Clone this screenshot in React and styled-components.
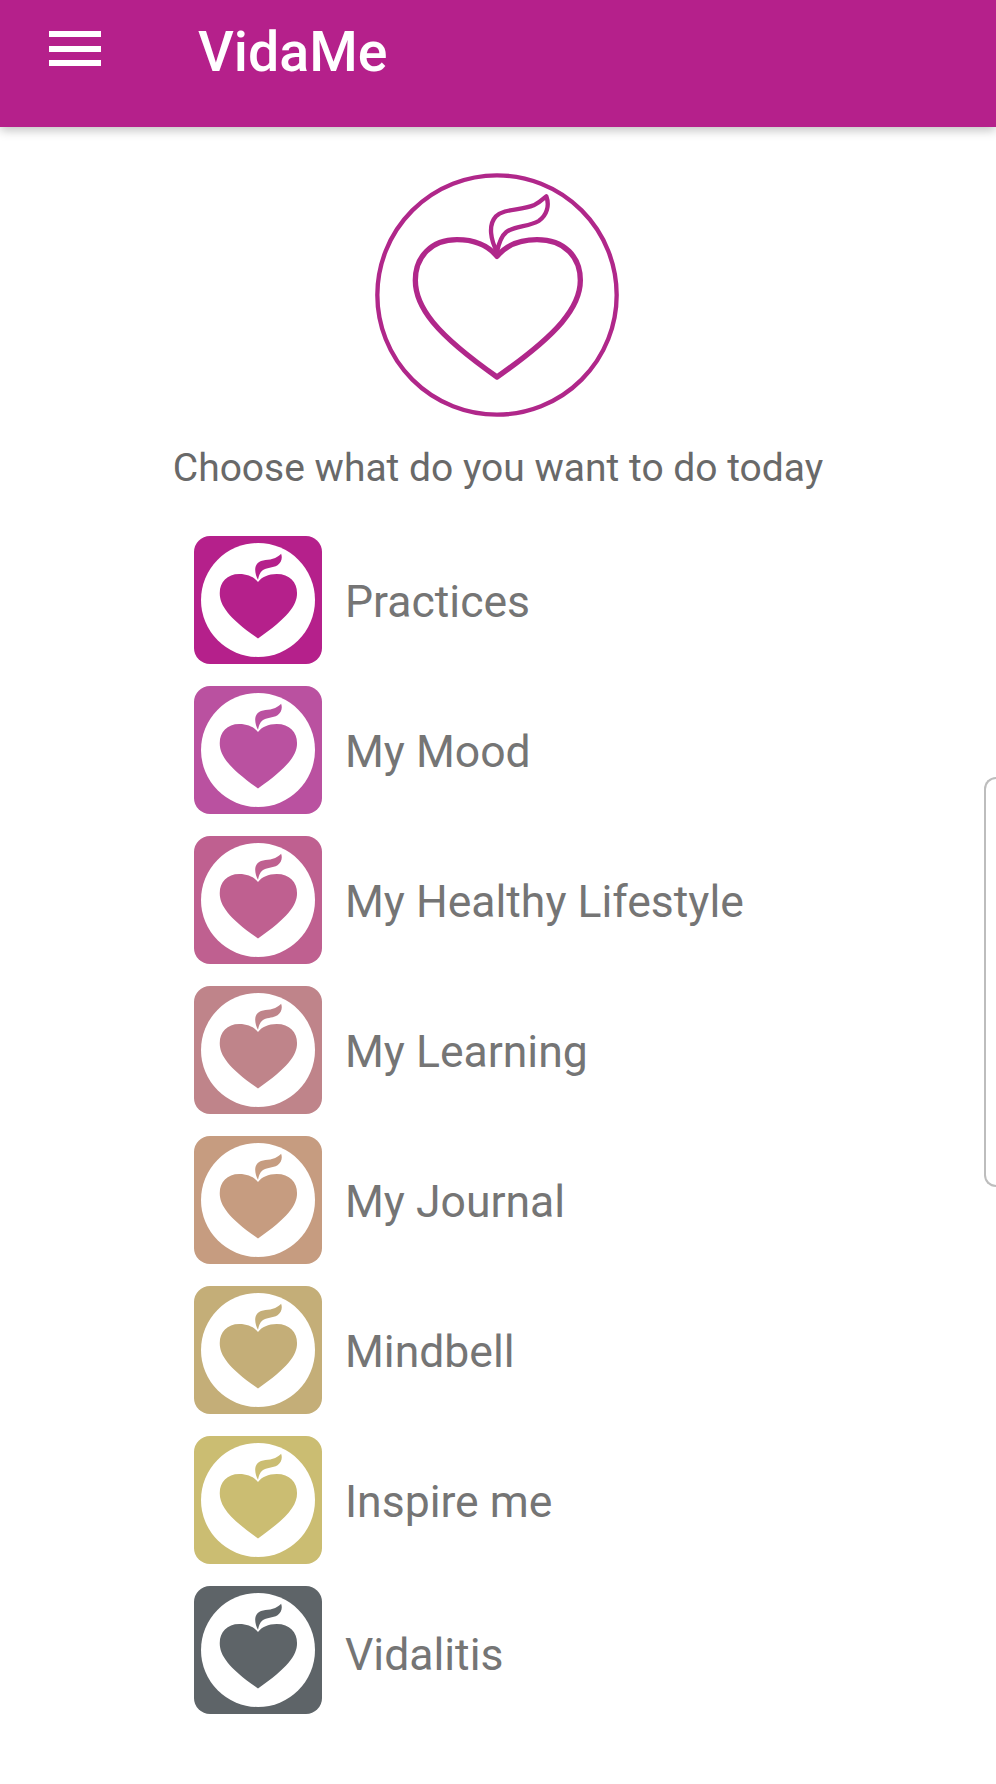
import React from "react"
import styled, { createGlobalStyle } from "styled-components"

const GlobalStyle = createGlobalStyle`
    html, body {
        margin: 0;
        padding: 0;
        background: #fff;
        font-family: Roboto, "Liberation Sans", sans-serif;
    }
`

const Page = styled.div`
    position: relative;
    width: 996px;
    height: 1784px;
    overflow: hidden;
    background: #fff;
`

const Header = styled.header`
    display: flex;
    align-items: flex-start;
    height: 127px;
    background: #b5208b;
    box-shadow: 0 3px 10px rgba(0, 0, 0, 0.26);
`

const Burger = styled.div`
    display: flex;
    flex-direction: column;
    gap: 8.5px;
    width: 52px;
    margin: 31px 0 0 49px;
`

const BurgerLine = styled.span`
    display: block;
    height: 6px;
    background: #fff;
`

const Title = styled.h1`
    margin: 22px 0 0 97px;
    font-size: 55.5px;
    line-height: 62px;
    font-weight: 500;
    color: #fff;
`

const Content = styled.main`
    display: flex;
    flex-direction: column;
    align-items: center;
    padding-top: 43px;
`

const BigLogo = styled.svg`
    display: block;
    width: 250px;
    height: 250px;
    margin-left: -2px;
`

const Intro = styled.p`
    margin: 25px 0 0;
    font-size: 39px;
    line-height: 46px;
    color: #696969;
`

const List = styled.ul`
    display: flex;
    flex-direction: column;
    gap: 22px;
    align-self: flex-start;
    list-style: none;
    margin: 45px 0 0;
    padding: 0 0 0 194px;
`

const Row = styled.li`
    display: flex;
    align-items: center;
    gap: 23px;
`

const Tile = styled.div`
    display: flex;
    align-items: center;
    justify-content: center;
    width: 128px;
    height: 128px;
    border-radius: 16px;
    background: ${props => props.$color};
`

const TileLogo = styled.svg`
    display: block;
    width: 114px;
    height: 114px;
`

const Label = styled.span`
    margin-top: ${props => props.$drop}px;
    font-size: 44.5px;
    line-height: 52px;
    color: #757575;
`

const SidePanel = styled.div`
    position: absolute;
    top: 777px;
    right: 0;
    width: 10px;
    height: 406px;
    border: 2px solid #bdbdbd;
    border-right: none;
    border-radius: 15px 0 0 15px;
`

const HEART = "M410 288C385 258 345 238 290 238C212 238 165 290 165 360C165 440 225 520 410 650C595 520 660 440 660 360C660 290 613 238 530 238C475 238 435 258 410 288Z"
const LEAF = "M410 275C392 240 382 195 407 168C432 143 480 152 520 135C540 125 550 115 558 108C568 135 560 165 535 182C505 200 465 195 438 215C422 228 415 250 410 275Z"

const items = [
    { label: "Practices", color: "#b5208b", drop: 4 },
    { label: "My Mood", color: "#ba51a0", drop: 4 },
    { label: "My Healthy Lifestyle", color: "#bf6090", drop: 4 },
    { label: "My Learning", color: "#bf848a", drop: 4 },
    { label: "My Journal", color: "#c69c80", drop: 4 },
    { label: "Mindbell", color: "#c4ae78", drop: 4 },
    { label: "Inspire me", color: "#cbbd72", drop: 4 },
    { label: "Vidalitis", color: "#5e6468", drop: 10 },
]

function App() {
    return (
        <Page>
            <GlobalStyle />
            <Header>
                <Burger>
                    <BurgerLine />
                    <BurgerLine />
                    <BurgerLine />
                </Burger>
                <Title>VidaMe</Title>
            </Header>
            <Content>
                <BigLogo viewBox="35 29 750 750">
                    <circle cx="410" cy="404" r="359" fill="none" stroke="#b0278a" strokeWidth="13" />
                    <path d={HEART} fill="none" stroke="#b0278a" strokeWidth="16" strokeLinejoin="round" />
                    <path d={LEAF} fill="none" stroke="#b0278a" strokeWidth="13" strokeLinejoin="round" />
                </BigLogo>
                <Intro>Choose what do you want to do today</Intro>
                <List>
                    {items.map(item => (
                        <Row key={item.label}>
                            <Tile $color={item.color}>
                                <TileLogo viewBox="45 39 730 730">
                                    <circle cx="410" cy="404" r="365" fill="#fff" />
                                    <path d={HEART} fill={item.color} />
                                    <path d={LEAF} fill={item.color} />
                                </TileLogo>
                            </Tile>
                            <Label $drop={item.drop}>{item.label}</Label>
                        </Row>
                    ))}
                </List>
            </Content>
            <SidePanel />
        </Page>
    )
}

export default App
